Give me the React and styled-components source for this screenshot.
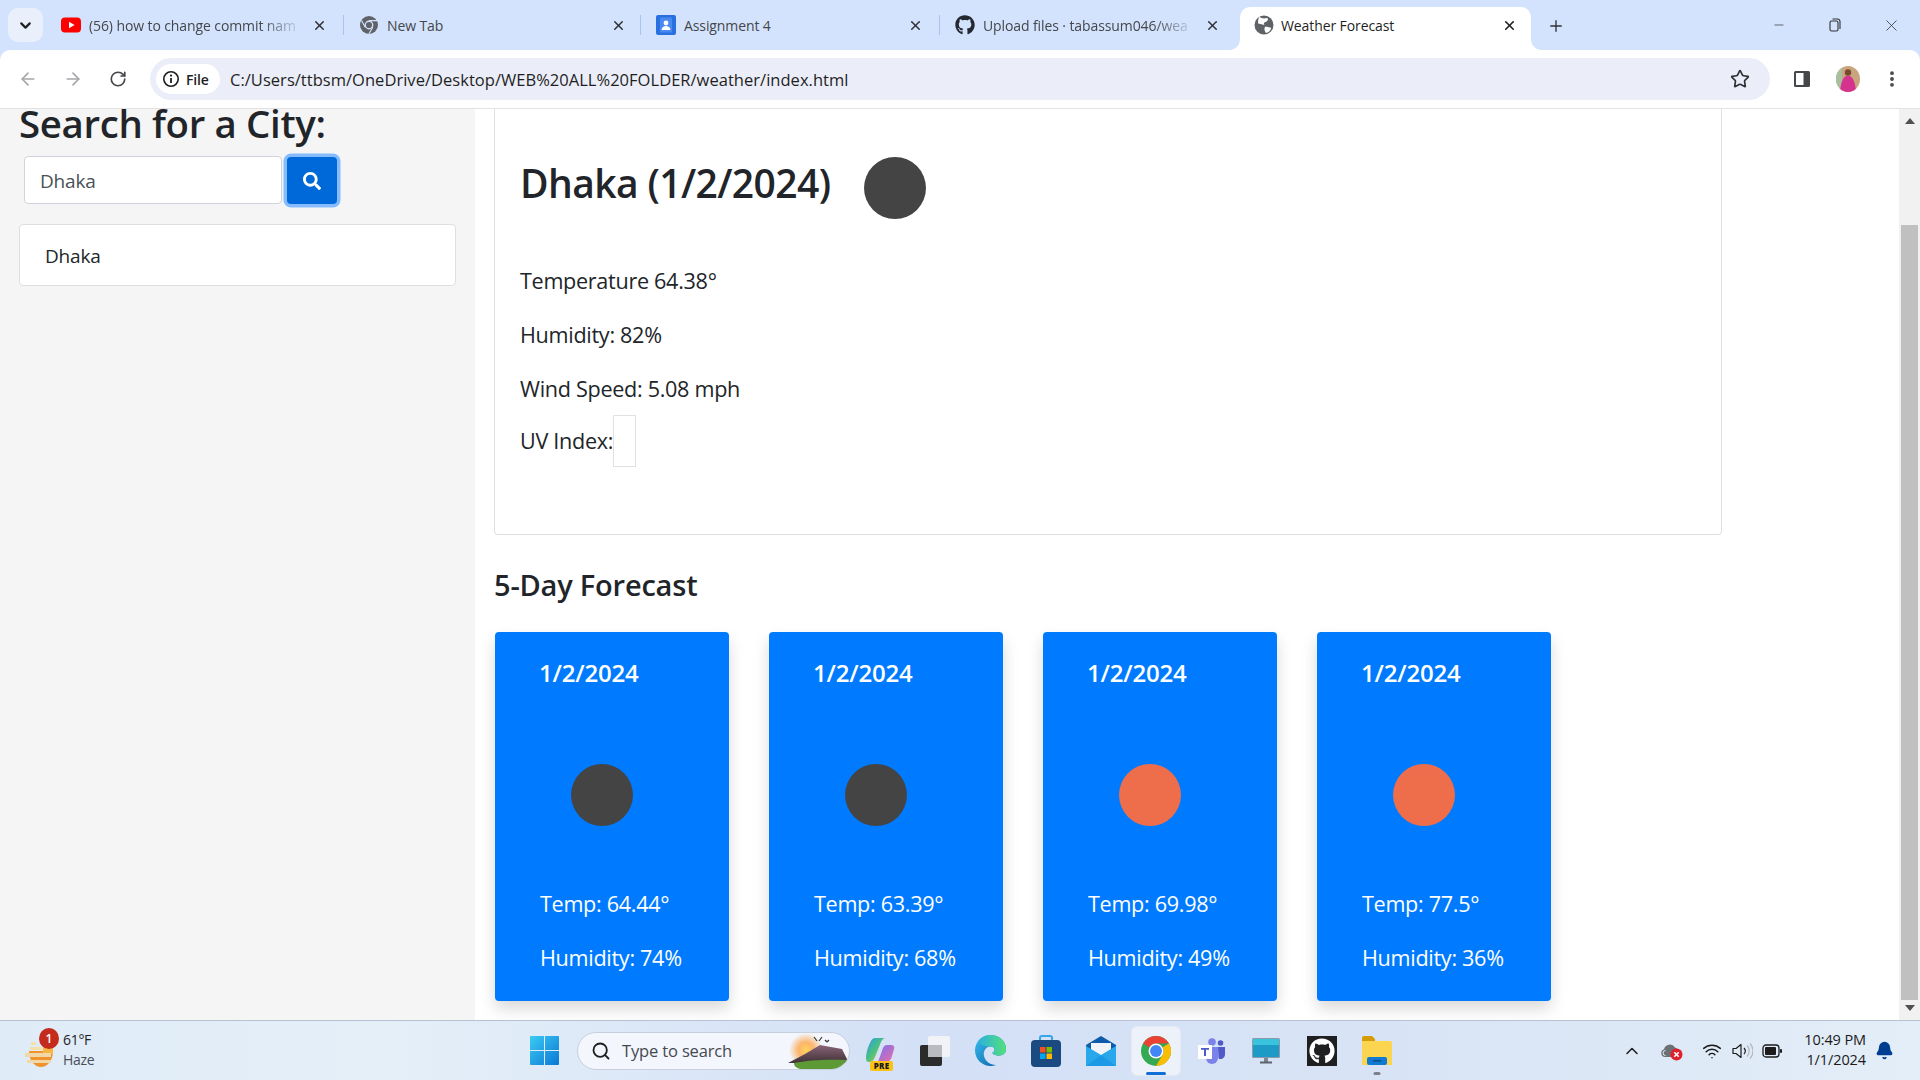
import React from 'react';
import styled, { createGlobalStyle } from 'styled-components';
import { FaSearch, FaGithub } from 'react-icons/fa';
import { ArrowLeft, ArrowRight, RotateCw, Star, X, Plus, ChevronDown, Minus, ChevronUp, Search, Wifi, Bell, EllipsisVertical } from 'lucide-react';

const FONT = '"Open Sans", "Noto Sans", "Liberation Sans", sans-serif';

const Global = createGlobalStyle`
  html, body { margin: 0; padding: 0; height: 100%; overflow: hidden; background: #fff; }
  body { font-family: ${FONT}; color: #212529; }
  * { box-sizing: border-box; }
`;

const Screen = styled.div`
  width: 1920px; height: 1080px; display: flex; flex-direction: column; overflow: hidden; background: #d3e3fd;
`;

/* ---------- tab strip ---------- */
const TabStrip = styled.div`
  height: 50px; flex: none; background: #d3e3fd; display: flex; align-items: flex-end; padding-left: 8px;
`;
const TabSearch = styled.div`
  width: 35px; height: 34px; margin: 0 3px 8px 0; border-radius: 10px; background: #e9f0fc;
  display: flex; align-items: center; justify-content: center; color: #1f1f1f;
`;
const Tab = styled.div`
  width: ${p => p.$w}px; height: 50px; flex: none; display: flex; align-items: center; position: relative;
  padding: 0 ${p => p.$pr}px 0 15px;
  &::after {
    content: ''; position: absolute; right: 0; top: 15px; height: 20px; width: 1px;
    background: ${p => (p.$divider ? '#a8c3ee' : 'transparent')};
  }
`;
const ActiveTab = styled.div`
  width: 291px; height: 43px; flex: none; display: flex; align-items: center; position: relative;
  padding: 0 14px 7px 14px; background: #fff; border-radius: 10px 10px 0 0; color: #1f1f1f;
  &::before, &::after {
    content: ''; position: absolute; bottom: 0; width: 10px; height: 10px;
  }
  &::before { left: -10px; background: radial-gradient(circle at 0 0, transparent 9.5px, #fff 10px); }
  &::after { right: -10px; background: radial-gradient(circle at 100% 0, transparent 9.5px, #fff 10px); }
`;
const Fav = styled.span`
  width: 20px; height: 20px; flex: none; display: flex; align-items: center; justify-content: center; margin-right: ${p => p.$mr || 8}px;
`;
const TabTitle = styled.span`
  flex: 1; min-width: 0; margin-right: 8px; white-space: nowrap; overflow: hidden; font-size: 14px; letter-spacing: -0.1px;
  color: ${p => (p.$active ? '#1f1f1f' : '#45474a')};
  ${p => p.$fade && 'mask-image: linear-gradient(90deg, #000 80%, transparent 100%);'}
`;
const TabClose = styled.span`
  width: 16px; height: 16px; flex: none; display: flex; align-items: center; justify-content: center; color: #303134;
`;
const NewTab = styled.div`
  margin: 0 0 12px 16px; width: 18px; height: 24px; display: flex; align-items: center; justify-content: center; color: #303134;
`;
const WinControls = styled.div`
  margin-left: auto; height: 100%; display: flex; align-items: center; padding: 0 1px 0 0; color: #303134;
`;
const WinBtn = styled.span`
  width: 56px; display: flex; justify-content: center;
`;

/* ---------- toolbar ---------- */
const Toolbar = styled.div`
  height: 59px; flex: none; background: #fff; border-bottom: 1px solid #e2e2e2; display: flex; align-items: flex-start;
  padding-top: 8px; border-radius: 10px 10px 0 0; position: relative;
`;
const NavBtn = styled.div`
  width: 45px; height: 42px; flex: none; display: flex; align-items: center; justify-content: center;
  color: ${p => (p.$off ? '#a4a6a9' : '#45474a')};
`;
const NavGroup = styled.div`
  display: flex; padding-left: 5px; width: 150px;
`;
const Omnibox = styled.div`
  width: 1620px; height: 42px; flex: none; background: #ebeef8; border-radius: 21px; display: flex; align-items: center; padding: 0 20px 0 6px;
`;
const Chip = styled.div`
  height: 30px; width: 64px; border-radius: 15px; background: #fff; display: flex; align-items: center; gap: 6px; padding-left: 6px;
  font-size: 14px; font-weight: 600; color: #1f1f1f; letter-spacing: -0.2px;
`;
const Url = styled.span`
  margin-left: 10px; font-size: 16.5px; color: #1f1f1f; letter-spacing: 0.03px; white-space: nowrap;
`;
const StarBtn = styled.span`
  margin-left: auto; display: flex; color: #303134;
`;
const ToolRight = styled.div`
  display: flex; align-items: center; height: 42px; padding-left: 23px;
`;
const Avatar = styled.span`
  width: 24px; height: 26px; flex: none; display: flex; margin: 0 22px 0 25px;
`;

/* ---------- page ---------- */
const Page = styled.div`
  flex: 1; min-height: 0; display: flex; background: #fff;
`;
const Sidebar = styled.aside`
  width: 475px; flex: none; background: #f5f5f5; padding-left: 19px;
`;
const SideHeading = styled.h2`
  margin: -8px 0 0 0; font-size: 38.4px; line-height: 44px; font-weight: 600; letter-spacing: -0.35px; color: #212529;
`;
const SearchRow = styled.form`
  display: flex; margin: 11px 0 0 5px; gap: 5px; align-items: flex-start;
`;
const CityInput = styled.div`
  width: 258px; height: 48px; background: #fff; border: 1px solid #ced4da; border-radius: 4px; padding: 2px 0 0 15px;
  display: flex; align-items: center; font-size: 19px; letter-spacing: -0.2px; color: #495057;
`;
const SearchBtn = styled.div`
  width: 50px; height: 47px; margin-top: 1px; background: #0069d9; border-radius: 4px; box-shadow: 0 0 0 3.5px #86bbfd;
  display: flex; align-items: center; justify-content: center; color: #fff;
`;
const CityItem = styled.div`
  width: 437px; height: 62px; margin-top: 20px; background: #fff; border: 1px solid #dfdfdf; border-radius: 4px;
  padding: 2px 0 0 25px; display: flex; align-items: center; font-size: 19px; letter-spacing: -0.2px; color: #212529;
`;
const Main = styled.main`
  flex: 1; min-width: 0; padding-left: 19px;
`;
const CurrentCard = styled.section`
  width: 1228px; height: 426px; border: 1px solid #dfdfdf; border-top: none; border-radius: 0 0 4px 4px; padding: 44px 25px 0;
`;
const TitleRow = styled.div`
  display: flex; align-items: flex-start; gap: 34px; margin-bottom: 43px;
`;
const CityTitle = styled.h2`
  margin: 0; font-size: 39px; line-height: 60px; font-weight: 600; letter-spacing: -0.6px; color: #212529;
`;
const Dot = styled.span`
  display: block; width: 62px; height: 62px; border-radius: 50%; flex: none; background: ${p => p.$c};
`;
const BigDot = styled(Dot)`
  margin-top: 4px;
`;
const Stat = styled.p`
  margin: 0 0 16px; font-size: 21.6px; line-height: 38px; display: flex; align-items: center; letter-spacing: -0.3px;
`;
const UvStat = styled(Stat)`
  margin-top: -9px; height: 52px;
`;
const UvBox = styled.span`
  display: block; width: 23px; height: 52px; border: 1px solid #dee2e6;
`;
const ForecastHeading = styled.h3`
  margin: 30px 0 0; font-size: 29px; line-height: 40px; font-weight: 600; letter-spacing: -0.2px; color: #212529;
`;
const ForecastRow = styled.div`
  display: flex; gap: 40px; margin-top: 27px; padding-left: 1px;
`;
const ForecastCard = styled.article`
  width: 234px; height: 369px; background: #007bff; border-radius: 4px; color: #fff; padding: 0 45px;
  box-shadow: 0 8px 16px rgba(0,0,0,.15);
`;
const DateLine = styled.div`
  height: 80px; display: flex; align-items: center; margin-left: -1px; font-size: 24px; font-weight: 600; letter-spacing: -0.18px; white-space: nowrap;
`;
const CardDot = styled(Dot)`
  margin: 52px 0 0 31px;
`;
const CardStat = styled.p`
  margin: ${p => (p.$first ? '59px 0 16px' : '0')}; font-size: 21.6px; line-height: 38px; letter-spacing: -0.3px; white-space: nowrap;
`;
const Scrollbar = styled.div`
  width: 21px; flex: none; background: #f1f1f1; display: flex; flex-direction: column; align-items: center;
`;
const ScrollArrow = styled.span`
  height: 24px; flex: none; display: flex; align-items: center; justify-content: center;
`;
const Thumb = styled.div`
  width: 17px; flex: 1; margin-top: 92px; margin-bottom: -4px; background: #c0c0c0;
`;

/* ---------- taskbar ---------- */
const Taskbar = styled.footer`
  height: 60px; flex: none; display: flex; align-items: center; position: relative;
  border-top: 1px solid #b6c1d2; background: linear-gradient(90deg, #dfebf7 0%, #e4eff8 20%, #d3e0f6 48%, #d8e3f5 72%, #e3eef8 100%);
`;
const WeatherWidget = styled.div`
  width: 530px; flex: none; display: flex; align-items: center; padding-left: 25px; gap: 9px; position: relative;
`;
const WeatherIconWrap = styled.span`
  width: 29px; height: 34px; position: relative; display: block;
`;
const Badge = styled.span`
  position: absolute; top: -6px; left: 14px; width: 20px; height: 21px; border-radius: 50%; background: #c42b1c; color: #fff;
  font-size: 12px; font-weight: 600; display: flex; align-items: center; justify-content: center;
`;
const WeatherText = styled.div`
  display: flex; flex-direction: column; margin-top: -2px; font-size: 14px; line-height: 20px; letter-spacing: -0.3px; color: #1f1f1f;
`;
const Muted = styled.span`
  color: #4a4f57;
`;
const WinLogo = styled.span`
  width: 29px; height: 29px; flex: none; display: flex;
`;
const SearchPill = styled.div`
  width: 273px; height: 38px; margin-left: 18px; flex: none; border-radius: 19px; background: #f3f6fd; border: 1px solid #c8d0de;
  display: flex; align-items: center; padding-left: 13px; gap: 11px; font-size: 16.5px; color: #45494f; letter-spacing: -0.15px; overflow: hidden;
`;
const PillArt = styled.span`
  margin-left: auto; width: 64px; height: 36px; display: flex; flex: none;
`;
const Dock = styled.div`
  display: flex; margin-left: 6px; gap: 7.2px; align-items: center;
`;
const DockItem = styled.div`
  width: 48px; height: 48px; border-radius: 5px; display: flex; align-items: center; justify-content: center; position: relative;
  background: ${p => (p.$active ? '#edf1fa' : 'transparent')};
  box-shadow: ${p => (p.$active ? '0 0 0 1px #e4e9f4' : 'none')};
  &::after {
    content: ''; position: absolute; bottom: 0; left: 50%; transform: translateX(-50%); height: 3px; border-radius: 2px;
    width: ${p => (p.$ind === 'on' ? 20 : p.$ind === 'run' ? 7 : 0)}px;
    background: ${p => (p.$ind === 'on' ? '#0f6fd6' : '#7c818a')};
  }
`;
const PreTag = styled.span`
  position: absolute; left: 14px; top: 34px; width: 23px; height: 10px; border-radius: 2px; background: #fbc117; color: #1a1a1a;
  font-size: 8px; line-height: 10px; font-weight: 800; text-align: center; letter-spacing: .2px;
`;
const Tray = styled.div`
  margin-left: auto; display: flex; align-items: center; padding-right: 26px; color: #1b1b1b;
`;
const TrayIcon = styled.span`
  display: flex; width: ${p => p.$w || 30}px; justify-content: center;
`;
const Clock = styled.div`
  margin: -2px 9px 0 15px; width: 64px; text-align: right; font-size: 14.5px; line-height: 20px; letter-spacing: -0.1px; color: #1b1b1b; white-space: nowrap;
`;

/* ---------- drawings ---------- */
const YouTube = () => (
  <svg width="20" height="20" viewBox="0 0 20 20"><rect y="2.500" width="20" height="15" rx="4" fill="#f00"/><path d="M8 6.700v6.600l5.600-3.300z" fill="#fff"/></svg>
);
const ChromeGrey = () => (
  <svg width="20" height="20" viewBox="0 0 20 20"><circle cx="10" cy="10" r="9" fill="#5f6368"/><circle cx="10" cy="10" r="4.400" fill="#d3e3fd"/><circle cx="10" cy="10" r="3.100" fill="#5f6368"/><path d="M10 5.600h8M6.200 12.200 2.500 5.500M13.800 12.200 9.800 19" stroke="#d3e3fd" strokeWidth="1.100"/></svg>
);
const Classroom = () => (
  <svg width="20" height="20" viewBox="0 0 20 20"><rect width="20" height="20" rx="2" fill="#2a6fe0"/><rect x="4" y="2.500" width="12" height="15" rx="1" fill="#4a8af0"/><circle cx="10" cy="8" r="2.400" fill="#fff"/><path d="M5.500 15c.4-3 2.200-4 4.500-4s4.100 1 4.500 4z" fill="#fff"/></svg>
);
const GlobeGrey = () => (
  <svg width="20" height="20" viewBox="0 0 20 20"><circle cx="10" cy="10" r="9.500" fill="#5f6368"/><path d="M5.500 1.800c2 2 4.800 2 7.500 1.200 2 .6.500 3.500-1 3.800-2 .5-2.800 1.800-1.500 3.200L4.200 8.500C4 6 4 4 5.500 1.800zM11.500 11.500l5.500 1.300c.5 2-2.500 4.800-5 5.200-1.200-1.800-2.500-4.500-.5-6.500z" fill="#fff"/></svg>
);
const WinRestore = () => (
  <svg width="14" height="14" viewBox="0 0 14 14" fill="none" stroke="#303134" strokeWidth="1.100"><rect x="2" y="3" width="8" height="10" rx="1.500"/><path d="M4.500 1h5A2.500 2.500 0 0 1 12 3.500V11"/></svg>
);
const InfoCircle = () => (
  <svg width="18" height="18" viewBox="0 0 18 18" fill="none"><circle cx="9" cy="9" r="7.200" stroke="#1f1f1f" strokeWidth="1.600"/><path d="M9 8v5" stroke="#1f1f1f" strokeWidth="1.800"/><circle cx="9" cy="5.600" r="1.100" fill="#1f1f1f"/></svg>
);
const SidePanel = () => (
  <svg width="18" height="18" viewBox="0 0 18 18"><rect x="1" y="1" width="16" height="16" rx="1.500" fill="#45474a"/><rect x="3" y="3" width="7.500" height="12" fill="#fff"/></svg>
);
const AvatarArt = () => (
  <svg width="24" height="26" viewBox="0 0 24 26"><clipPath id="av"><ellipse cx="12" cy="13" rx="12" ry="13"/></clipPath><g clipPath="url(#av)"><rect width="24" height="26" fill="#c9a57e"/><rect x="0" y="0" width="6" height="26" fill="#a9c0a0"/><path d="M4 28c0-8 2-16 6-18h4c4 2 6 10 6 18z" fill="#d6338f"/><circle cx="12" cy="6.500" r="3.200" fill="#7a4a2e"/></g></svg>
);
const WeatherArt = () => (
  <svg width="29" height="34" viewBox="0 0 29 34"><path d="M4 17h24c0 10-6 16-12 16S4 27 4 17z" fill="#f2922a"/><path d="M18 10h10v10H18z" fill="#f7b541"/><rect x="0" y="19" width="26" height="4" fill="#f0d8a8"/><rect x="2" y="26" width="24" height="3" fill="#f0d8a8"/><rect x="5" y="13" width="12" height="3" fill="#f6e0aa"/><rect x="6" y="8" width="5" height="3" fill="#f6e0aa"/></svg>
);
const WinArt = () => (
  <svg width="29" height="29" viewBox="0 0 29 29"><defs><linearGradient id="w" x1="0" y1="0" x2="1" y2="1"><stop offset="0" stopColor="#3ccbf4"/><stop offset="1" stopColor="#0a78d4"/></linearGradient></defs><path d="M1 0h13v14H0V1a1 1 0 0 1 1-1zM15 0h13a1 1 0 0 1 1 1v13H15zM0 15h14v14H1a1 1 0 0 1-1-1zM15 15h14v13a1 1 0 0 1-1 1H15z" fill="url(#w)"/></svg>
);
const Mountain = () => (
  <svg width="64" height="36" viewBox="0 0 64 36"><defs><radialGradient id="s"><stop offset="0" stopColor="#ffd35a"/><stop offset=".45" stopColor="#fbb56c"/><stop offset="1" stopColor="#f3f6fd"/></radialGradient><linearGradient id="m" x1="0" y1="0" x2="0" y2="1"><stop offset="0" stopColor="#8a6478"/><stop offset="1" stopColor="#3f3236"/></linearGradient></defs><circle cx="21" cy="17" r="17" fill="url(#s)"/><path d="M3 30 20 21 35 12l22 4 6 12v2z" fill="url(#m)"/><path d="M9 30c14-3 34-4 54-3 0 5-3 9-8 9H18c-5 0-9-2-9-6z" fill="#5d9a35"/><path d="M29 4l3 4M37 4l-3 4M40 7l2 2M44 7l-2 2" stroke="#333" strokeWidth="1.200"/></svg>
);
const CopilotArt = () => (
  <svg width="30" height="28" viewBox="0 0 30 28"><defs><linearGradient id="c1" x1="0" y1="0" x2="1" y2="1"><stop offset="0" stopColor="#2a9be8"/><stop offset=".5" stopColor="#4cc27c"/><stop offset="1" stopColor="#f2c12e"/></linearGradient><linearGradient id="c2" x1="0" y1="0" x2="1" y2="1"><stop offset="0" stopColor="#7a6ff0"/><stop offset="1" stopColor="#ec6fa8"/></linearGradient></defs><path d="M10 1h10c-2 .5-3 2-4 4L10 20c-1 3-3 5-6 5-2 0-3-1-3-4 0-4 1-8 3-13 2-4 3-7 6-7z" fill="url(#c1)"/><path d="M13 25h8c3 0 5-2 6-6l2-7c1-3-1-4-3-4h-4c-2 0-3 1-4 3z" fill="url(#c2)"/></svg>
);
const TaskViewArt = () => (
  <svg width="30" height="30" viewBox="0 0 30 30"><rect x="0" y="9" width="22" height="21" rx="2" fill="#2b2b2b"/><rect x="8" y="0" width="22" height="21" rx="2" fill="#f2f3f6"/><rect x="8" y="9" width="14" height="12" fill="#b9bbc0"/></svg>
);
const EdgeArt = () => (
  <svg width="31" height="31" viewBox="0 0 31 31"><defs><linearGradient id="e1" x1="0" y1="0" x2="1" y2="1"><stop offset="0" stopColor="#35c1f1"/><stop offset="1" stopColor="#0c59a4"/></linearGradient><linearGradient id="e2" x1="0" y1="0" x2="1" y2="0"><stop offset="0" stopColor="#2db1dd"/><stop offset="1" stopColor="#54e07a"/></linearGradient></defs><path d="M15.500 0C24 0 31 6 31 14c0 5-4 6.500-7.500 6.500-3 0-6-1-6-3 3-1 3-6-2-6C11 11.500 8 16 9 21c1 5 6 9 12 9-2 .7-4 1-5.500 1C7 31 0 24 0 15.500S7 0 15.500 0z" fill="url(#e1)"/><path d="M3 6.500C6 2 11 0 15.500 0 24 0 31 6 31 14c0 5-4 6.500-7.500 6.500-3 0-6-1-6-3 3-1 3-6-2-6C10 11.500 5 10 3 6.500z" fill="url(#e2)"/></svg>
);
const StoreArt = () => (
  <svg width="30" height="32" viewBox="0 0 30 32"><path d="M9 6V3a2 2 0 0 1 2-2h8a2 2 0 0 1 2 2v3" fill="none" stroke="#35a6e8" strokeWidth="2"/><rect x="0" y="5" width="30" height="27" rx="4" fill="#1b4a80"/><rect x="9" y="12" width="5.500" height="5.500" fill="#f25022"/><rect x="15.500" y="12" width="5.500" height="5.500" fill="#7fba00"/><rect x="9" y="18.500" width="5.500" height="5.500" fill="#00a4ef"/><rect x="15.500" y="18.500" width="5.500" height="5.500" fill="#ffb900"/></svg>
);
const MailArt = () => (
  <svg width="30" height="30" viewBox="0 0 30 30"><path d="M15 0 30 9v4H0V9z" fill="#0d5cab"/><path d="M5 7h20v12H5z" fill="#f0f4f8"/><path d="M0 10l15 9 15-9v20H0z" fill="#28a8ea"/><path d="M0 30 15 19l15 11z" fill="#1490df" opacity=".6"/></svg>
);
const ChromeArt = () => (
  <svg width="30" height="30" viewBox="0 0 48 48"><circle cx="24" cy="24" r="24" fill="#34a853"/><path d="M24 0a24 24 0 0 1 20.800 12H24a12 12 0 0 0-10.400 6L3.200 12A24 24 0 0 1 24 0z" fill="#ea4335"/><path d="M44.800 12A24 24 0 0 1 24 48l10.400-18a12 12 0 0 0 0-12z" fill="#fbbc04"/><circle cx="24" cy="24" r="12" fill="#fff"/><circle cx="24" cy="24" r="9.500" fill="#4285f4"/></svg>
);
const TeamsArt = () => (
  <svg width="27" height="26" viewBox="0 0 27 26"><circle cx="14" cy="4" r="3.800" fill="#7b83eb"/><circle cx="22.500" cy="5" r="2.800" fill="#5059c9"/><path d="M8 9h12v11a6 6 0 0 1-12 0z" fill="#7b83eb"/><path d="M20 9h7v8a4.500 4.500 0 0 1-6.500 3.500z" fill="#5059c9"/><rect x="0" y="7" width="14" height="14" fill="#fff"/><path d="M3 10h8v1.800H8V18H6v-6.200H3z" fill="#5059c9"/></svg>
);
const MonitorArt = () => (
  <svg width="28" height="26" viewBox="0 0 28 26"><rect width="28" height="20" rx="1.500" fill="#8a9aa8"/><rect x="1" y="1" width="26" height="18" fill="#1d9ac6"/><path d="M1 1h26v6H1z" fill="#39c3dc"/><rect x="12" y="20" width="4" height="4" fill="#7d8791"/><rect x="8" y="23.500" width="12" height="2" fill="#5c646c"/></svg>
);
const GithubTile = styled.span`
  width: 30px; height: 30px; background: #1f1f22; display: flex; align-items: center; justify-content: center; color: #fff;
`;
const FolderArt = () => (
  <svg width="30" height="29" viewBox="0 0 30 29"><path d="M0 2a2 2 0 0 1 2-2h8l3 3v3H0z" fill="#d79b08"/><path d="M0 5h28a2 2 0 0 1 2 2v22H0z" fill="#fbd54f"/><rect x="5" y="21" width="20" height="8" rx="2" fill="#0f7ad1"/><rect x="11" y="24" width="8" height="1.600" fill="#0b4f8a"/></svg>
);
const CloudError = () => (
  <svg width="22" height="20" viewBox="0 0 22 20"><path d="M4 16a4 4 0 0 1-1-7.800A6 6 0 0 1 14 6.500 4 4 0 0 1 15 14v2z" fill="#6c6f73"/><path d="M4.500 14.500a2.500 2.500 0 0 1 0-5" fill="none" stroke="#e6edf6" strokeWidth="1"/><circle cx="15.500" cy="13.500" r="6" fill="#e0202c"/><path d="M13.300 11.300l4.400 4.400M17.700 11.300l-4.400 4.400" stroke="#fff" strokeWidth="1.600"/></svg>
);
const VolumeArt = () => (
  <svg width="21" height="18" viewBox="0 0 21 18" fill="none"><path d="M1 6.500h3L9 2.500v13l-5-4H1z" stroke="#1b1b1b" strokeWidth="1.200" strokeLinejoin="round"/><path d="M12 6a4.500 4.500 0 0 1 0 6" stroke="#1b1b1b" strokeWidth="1.200"/><path d="M15 3.500a8 8 0 0 1 0 11M18 1.500a11 11 0 0 1 0 15" stroke="#b4b9c0" strokeWidth="1.200"/></svg>
);
const BatteryArt = () => (
  <svg width="20" height="14" viewBox="0 0 20 14"><rect x="1" y="1" width="16" height="12" rx="3" fill="none" stroke="#1b1b1b" strokeWidth="1.300"/><rect x="3" y="3" width="11" height="8" rx="1" fill="#1b1b1b"/><rect x="18" y="5" width="2" height="4" rx="1" fill="#1b1b1b"/></svg>
);
const UpArrow = () => <svg width="10" height="6" viewBox="0 0 10 6"><path d="M5 0 10 6H0z" fill="#505050"/></svg>;
const DownArrow = () => <svg width="10" height="6" viewBox="0 0 10 6"><path d="M5 6 10 0H0z" fill="#505050"/></svg>;

const tabs = [
  { w: 298, pr: 17, icon: <YouTube />, title: '(56) how to change commit nam', fade: true, divider: true },
  { w: 297, pr: 15, icon: <ChromeGrey />, title: 'New Tab', divider: true },
  { w: 299, pr: 17, icon: <Classroom />, title: 'Assignment 4', divider: true },
  { w: 300, pr: 20, icon: <FaGithub size={20} color="#24292f" />, title: 'Upload files · tabassum046/wea', fade: true },
];
const days = [
  { temp: '64.44', hum: 74, c: '#444444' },
  { temp: '63.39', hum: 68, c: '#444444' },
  { temp: '69.98', hum: 49, c: '#ee6e4b' },
  { temp: '77.5', hum: 36, c: '#ee6e4b' },
];

export default function App() {
  return (
    <Screen>
      <Global />
      <TabStrip>
        <TabSearch><ChevronDown size={17} strokeWidth={3} /></TabSearch>
        {tabs.map(t => (
          <Tab key={t.title} $w={t.w} $pr={t.pr} $divider={t.divider}>
            <Fav>{t.icon}</Fav>
            <TabTitle $fade={t.fade}>{t.title}</TabTitle>
            <TabClose><X size={15} strokeWidth={2.4} /></TabClose>
          </Tab>
        ))}
        <ActiveTab>
          <Fav $mr={7}><GlobeGrey /></Fav>
          <TabTitle $active>Weather Forecast</TabTitle>
          <TabClose><X size={15} strokeWidth={2.6} color="#1f1f1f" /></TabClose>
        </ActiveTab>
        <NewTab><Plus size={20} strokeWidth={1.8} /></NewTab>
        <WinControls>
          <WinBtn><Minus size={14} strokeWidth={1.2} /></WinBtn>
          <WinBtn><WinRestore /></WinBtn>
          <WinBtn><X size={19} strokeWidth={1} /></WinBtn>
        </WinControls>
      </TabStrip>
      <Toolbar>
        <NavGroup>
          <NavBtn $off><ArrowLeft size={20} /></NavBtn>
          <NavBtn $off><ArrowRight size={20} /></NavBtn>
          <NavBtn><RotateCw size={18} strokeWidth={2.2} /></NavBtn>
        </NavGroup>
        <Omnibox>
          <Chip><InfoCircle />File</Chip>
          <Url>C:/Users/ttbsm/OneDrive/Desktop/WEB%20ALL%20FOLDER/weather/index.html</Url>
          <StarBtn><Star size={20} strokeWidth={2} /></StarBtn>
        </Omnibox>
        <ToolRight>
          <SidePanel />
          <Avatar><AvatarArt /></Avatar>
          <EllipsisVertical size={20} strokeWidth={2.6} color="#45474a" />
        </ToolRight>
      </Toolbar>
      <Page>
        <Sidebar>
          <SideHeading>Search for a City:</SideHeading>
          <SearchRow>
            <CityInput>Dhaka</CityInput>
            <SearchBtn><FaSearch size={18} /></SearchBtn>
          </SearchRow>
          <CityItem>Dhaka</CityItem>
        </Sidebar>
        <Main>
          <CurrentCard>
            <TitleRow>
              <CityTitle>Dhaka (1/2/2024)</CityTitle>
              <BigDot $c="#444444" />
            </TitleRow>
            <Stat>Temperature 64.38°</Stat>
            <Stat>Humidity: 82%</Stat>
            <Stat>Wind Speed: 5.08 mph</Stat>
            <UvStat>UV Index:<UvBox /></UvStat>
          </CurrentCard>
          <ForecastHeading>5-Day Forecast</ForecastHeading>
          <ForecastRow>
            {days.map(d => (
              <ForecastCard key={d.temp}>
                <DateLine>1/2/2024</DateLine>
                <CardDot $c={d.c} />
                <CardStat $first>Temp: {d.temp}°</CardStat>
                <CardStat>Humidity: {d.hum}%</CardStat>
              </ForecastCard>
            ))}
          </ForecastRow>
        </Main>
        <Scrollbar>
          <ScrollArrow><UpArrow /></ScrollArrow>
          <Thumb />
          <ScrollArrow><DownArrow /></ScrollArrow>
        </Scrollbar>
      </Page>
      <Taskbar>
        <WeatherWidget>
          <WeatherIconWrap><WeatherArt /><Badge>1</Badge></WeatherIconWrap>
          <WeatherText><span>61°F</span><Muted>Haze</Muted></WeatherText>
        </WeatherWidget>
        <WinLogo><WinArt /></WinLogo>
        <SearchPill>
          <Search size={20} strokeWidth={2.2} color="#1f1f1f" />
          Type to search
          <PillArt><Mountain /></PillArt>
        </SearchPill>
        <Dock>
          <DockItem><CopilotArt /><PreTag>PRE</PreTag></DockItem>
          <DockItem><TaskViewArt /></DockItem>
          <DockItem><EdgeArt /></DockItem>
          <DockItem><StoreArt /></DockItem>
          <DockItem><MailArt /></DockItem>
          <DockItem $active $ind="on"><ChromeArt /></DockItem>
          <DockItem><TeamsArt /></DockItem>
          <DockItem><MonitorArt /></DockItem>
          <DockItem><GithubTile><FaGithub size={26} /></GithubTile></DockItem>
          <DockItem $ind="run"><FolderArt /></DockItem>
        </Dock>
        <Tray>
          <TrayIcon><ChevronUp size={20} strokeWidth={1.8} /></TrayIcon>
          <TrayIcon $w={50}><CloudError /></TrayIcon>
          <TrayIcon $w={30}><Wifi size={20} strokeWidth={1.8} /></TrayIcon>
          <TrayIcon $w={30}><VolumeArt /></TrayIcon>
          <TrayIcon $w={30}><BatteryArt /></TrayIcon>
          <Clock>10:49 PM<br />1/1/2024</Clock>
          <Bell size={19} fill="#003e92" color="#003e92" />
        </Tray>
      </Taskbar>
    </Screen>
  );
}
